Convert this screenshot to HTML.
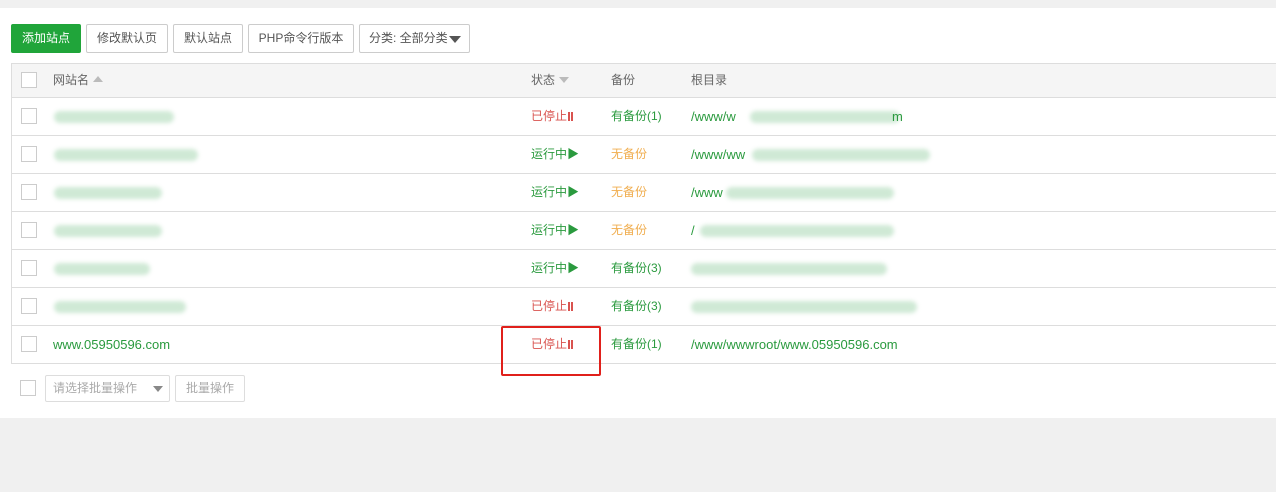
<!DOCTYPE html>
<html><head><meta charset="utf-8"><style>
*{box-sizing:border-box;margin:0;padding:0}
body{width:1276px;height:492px;background:#f0f0f0;font-family:"Liberation Sans","Noto Sans CJK SC",sans-serif;font-size:12px;color:#666;position:relative;overflow:hidden}
.panel{position:absolute;left:0;top:8px;width:1276px;height:410px;background:#fff}
.btn{position:absolute;top:24px;height:29px;border:1px solid #ccc;border-radius:2px;background:#fff;color:#555;font-size:12px;line-height:27px;text-align:center}
.tbl{position:absolute;left:11px;top:63px;width:1265px;height:301px;border:1px solid #ddd;border-right:none}
.hdr{position:absolute;left:0;top:0;width:100%;height:34px;background:#f5f5f5;border-bottom:1px solid #ddd}
.row{position:absolute;left:0;width:100%;height:38px;border-bottom:1px solid #ddd}
.cb{position:absolute;left:9px;width:16px;height:16px;border:1px solid #ccc;background:#fff}
.t{position:absolute;white-space:nowrap;font-size:12px;top:0;line-height:37px}
.t.l{font-size:13px}
.hdr .t{line-height:33px}
.g{color:#2a9a3e}.r{color:#d9534f}.o{color:#f0ad4e}
.blur{position:absolute;height:12px;background:#cfe9d5;border-radius:6px;filter:blur(2px)}
.pz{display:inline-block;width:2px;height:9px;background:#d9534f;margin-left:1px;vertical-align:-1px}
.ar{display:inline-block;width:0;height:0;border:5px solid transparent;margin-left:4px}
</style></head><body>
<div class="panel"></div>
<div class="btn" style="left:11px;width:70px;background:#20a53a;border-color:#20a53a;color:#fff">添加站点</div>
<div class="btn" style="left:86px;width:82px">修改默认页</div>
<div class="btn" style="left:173px;width:70px">默认站点</div>
<div class="btn" style="left:248px;width:106px">PHP命令行版本</div>
<div class="btn" style="left:359px;width:111px;text-align:left;padding-left:9px">分类: 全部分类 <span style="position:absolute;right:8px;top:11px;border:6px solid transparent;border-top:7px solid #555;border-bottom:none"></span></div>
<div class="tbl">
<div class="hdr">
<div class="cb" style="top:8px"></div>
<div class="t" style="left:41px">网站名<span class="ar" style="border-bottom:6px solid #bbb;border-top:none;vertical-align:2px"></span></div>
<div class="t" style="left:519px">状态<span class="ar" style="border-top:6px solid #bbb;border-bottom:none;vertical-align:1px"></span></div>
<div class="t" style="left:599px">备份</div>
<div class="t" style="left:679px">根目录</div>
</div>
<div class="row" style="top:34px"><div class="cb" style="top:10px"></div><div class="blur" style="left:42px;top:13px;width:120px"></div><div class="t r" style="left:519px">已停止<span class="pz"></span><span class="pz"></span></div><div class="t g" style="left:599px">有备份(1)</div><div class="t g l" style="left:679px">/www/w</div><div class="blur" style="left:738px;top:13px;width:150px"></div><div class="t g l" style="left:880px">m</div></div>
<div class="row" style="top:72px"><div class="cb" style="top:10px"></div><div class="blur" style="left:42px;top:13px;width:144px"></div><div class="t g" style="left:519px">运行中▶</div><div class="t o" style="left:599px">无备份</div><div class="t g l" style="left:679px">/www/ww</div><div class="blur" style="left:740px;top:13px;width:178px"></div></div>
<div class="row" style="top:110px"><div class="cb" style="top:10px"></div><div class="blur" style="left:42px;top:13px;width:108px"></div><div class="t g" style="left:519px">运行中▶</div><div class="t o" style="left:599px">无备份</div><div class="t g l" style="left:679px">/www</div><div class="blur" style="left:714px;top:13px;width:168px"></div></div>
<div class="row" style="top:148px"><div class="cb" style="top:10px"></div><div class="blur" style="left:42px;top:13px;width:108px"></div><div class="t g" style="left:519px">运行中▶</div><div class="t o" style="left:599px">无备份</div><div class="t g l" style="left:679px">/</div><div class="blur" style="left:688px;top:13px;width:194px"></div></div>
<div class="row" style="top:186px"><div class="cb" style="top:10px"></div><div class="blur" style="left:42px;top:13px;width:96px"></div><div class="t g" style="left:519px">运行中▶</div><div class="t g" style="left:599px">有备份(3)</div><div class="blur" style="left:679px;top:13px;width:196px"></div></div>
<div class="row" style="top:224px"><div class="cb" style="top:10px"></div><div class="blur" style="left:42px;top:13px;width:132px"></div><div class="t r" style="left:519px">已停止<span class="pz"></span><span class="pz"></span></div><div class="t g" style="left:599px">有备份(3)</div><div class="blur" style="left:679px;top:13px;width:226px"></div></div>
<div class="row" style="top:262px;border-bottom:none"><div class="cb" style="top:10px"></div><div class="t g l" style="left:41px">www.05950596.com</div><div class="t r" style="left:519px">已停止<span class="pz"></span><span class="pz"></span></div><div class="t g" style="left:599px">有备份(1)</div><div class="t g l" style="left:679px">/www/wwwroot/www.05950596.com</div></div>
</div>
<div style="position:absolute;left:501px;top:326px;width:100px;height:50px;border:2px solid #e0201b;border-radius:2px"></div>
<div class="cb" style="left:20px;top:380px"></div>
<div style="position:absolute;left:45px;top:375px;width:125px;height:27px;border:1px solid #ddd;border-radius:2px;color:#aaa;line-height:25px;padding-left:7px">请选择批量操作<span style="position:absolute;right:6px;top:10px;border:5px solid transparent;border-top:6px solid #888;border-bottom:none"></span></div>
<div style="position:absolute;left:175px;top:375px;width:70px;height:27px;border:1px solid #ddd;border-radius:2px;color:#aaa;line-height:25px;text-align:center">批量操作</div>
</body></html>
